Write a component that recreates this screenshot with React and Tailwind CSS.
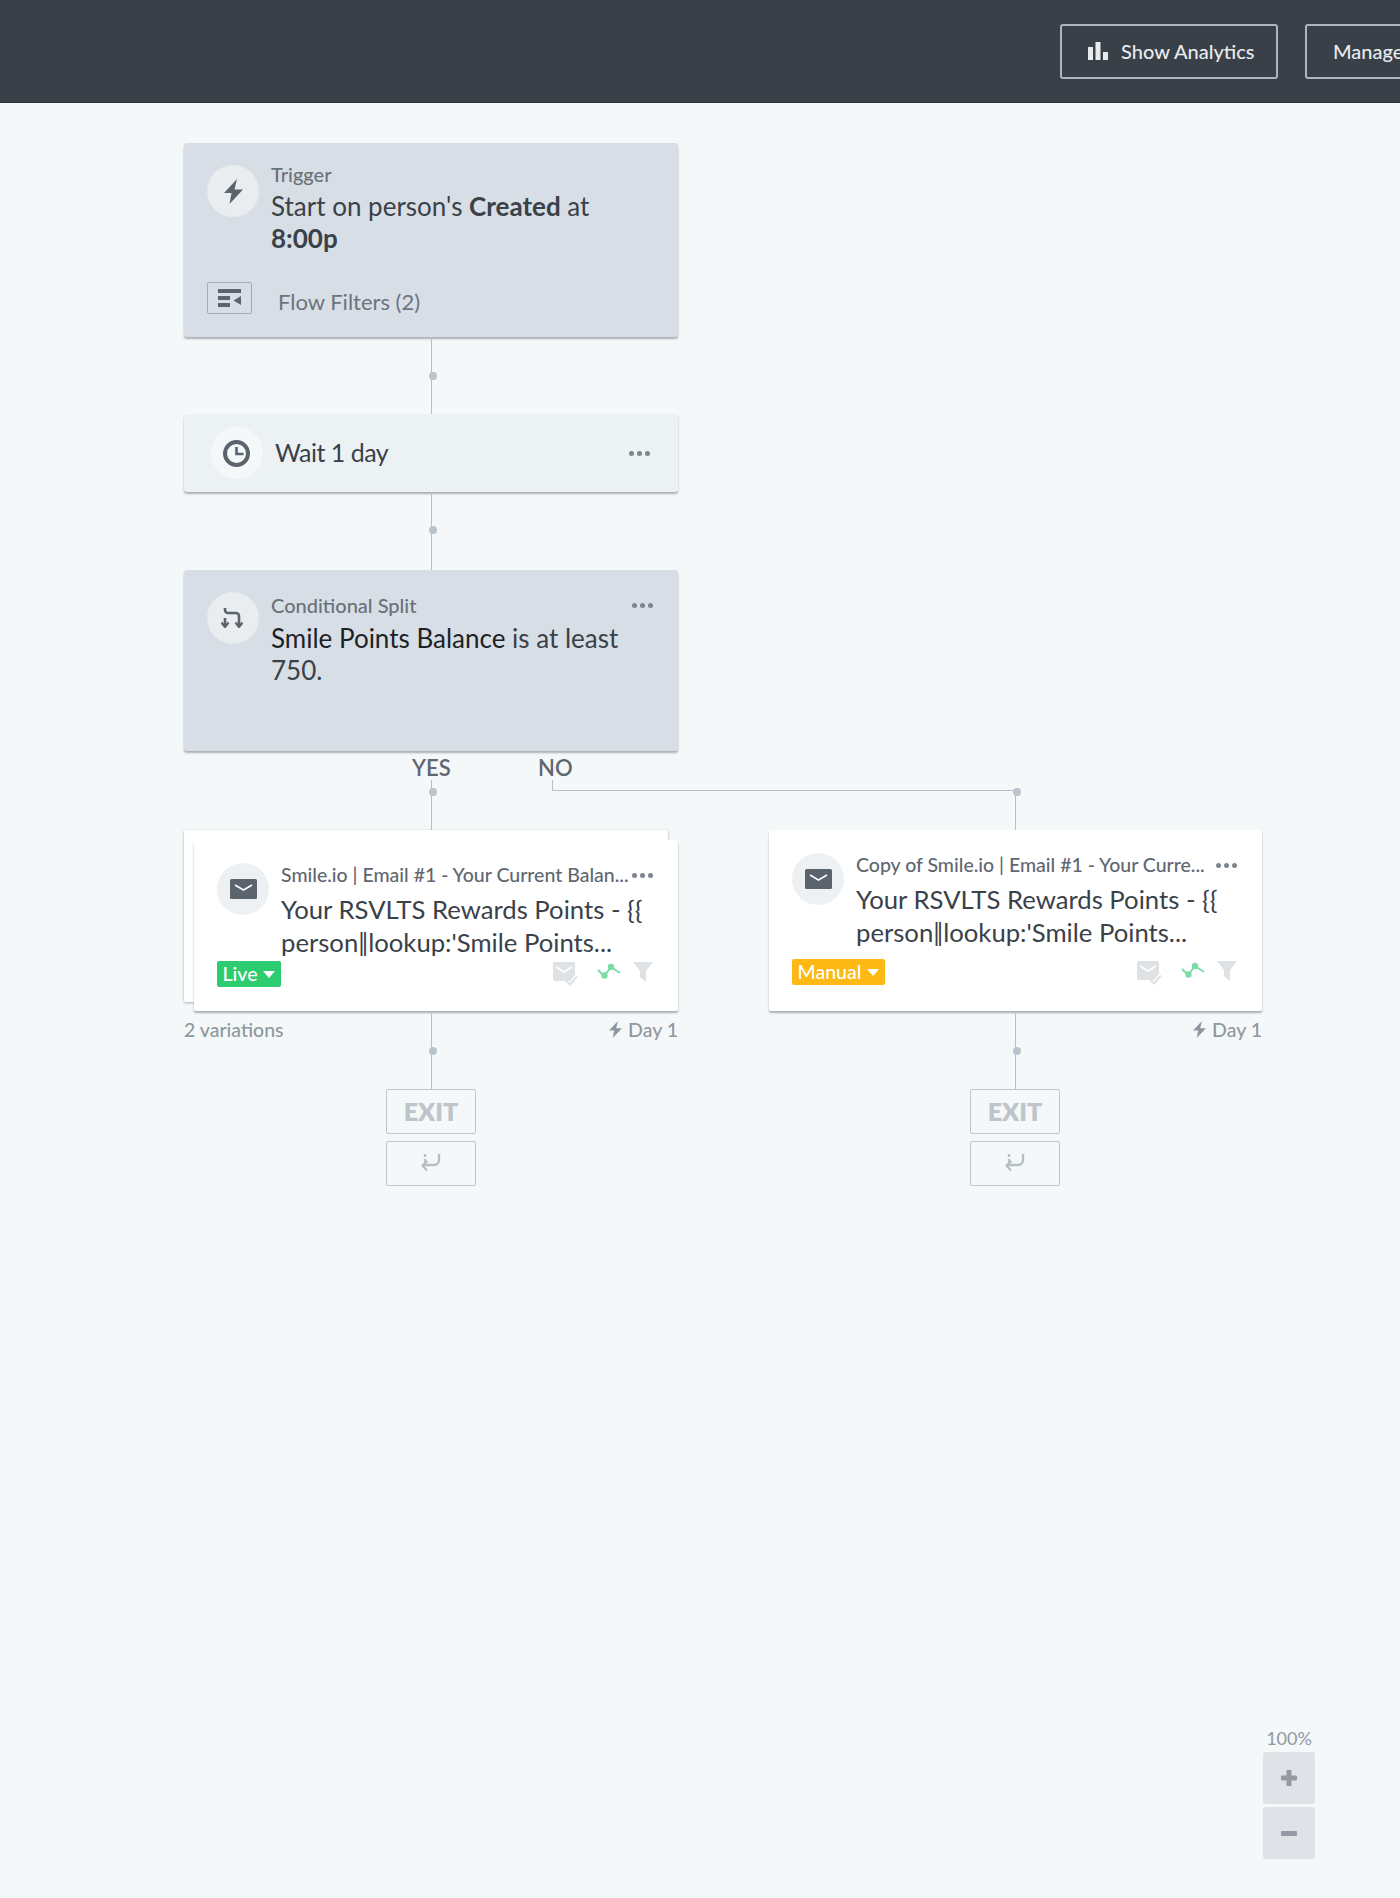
const Dots = ({ className = "" }) => (
  <div className={`flex gap-[3px] shrink-0 ${className}`}>
    <span className="w-[5px] h-[5px] rounded-full bg-[#7d858e]" />
    <span className="w-[5px] h-[5px] rounded-full bg-[#7d858e]" />
    <span className="w-[5px] h-[5px] rounded-full bg-[#7d858e]" />
  </div>
);

const Circle = ({ className = "", children }) => (
  <div className={`w-[52px] h-[52px] rounded-full flex items-center justify-center shrink-0 ${className}`}>{children}</div>
);

const Bolt = ({ className = "", fill = "#5b636d" }) => (
  <svg viewBox="0 0 19 25" className={className}>
    <polygon points="13,0 0,14 7.5,14 5.5,25 19,10.5 10.5,10.5" fill={fill} />
  </svg>
);

const MailIcon = () => (
  <svg width="27" height="20" viewBox="0 0 27 20">
    <rect width="27" height="20" rx="1.5" fill="#5b636d" />
    <path d="M5 6l8.5 5L22 6" fill="none" stroke="#fff" strokeWidth="1.6" />
  </svg>
);

const StatIcons = ({ className = "" }) => (
  <div className={`flex items-start ${className}`}>
    <svg width="25" height="24" viewBox="0 0 25 24">
      <path d="M0 1.5A1.5 1.5 0 0 1 1.5 0h19A1.5 1.5 0 0 1 22 1.5V13l-5 6H1.5A1.5 1.5 0 0 1 0 17.5z" fill="#dfe2e5" />
      <path d="M3 5l8 5 8-5" fill="none" stroke="#fff" strokeWidth="1.6" />
      <path d="M13 19l4 3.5 7-8" fill="none" stroke="#dfe2e5" strokeWidth="2" />
    </svg>
    <svg width="24" height="18" viewBox="0 0 24 18" className="ml-[19px] mt-[1px]">
      <path d="M1 7l6 6 7-9 9 6" fill="none" stroke="#7bdca5" strokeWidth="2" />
      <circle cx="7.5" cy="12.5" r="3.2" fill="#7bdca5" />
      <circle cx="14" cy="4" r="3.2" fill="#7bdca5" />
    </svg>
    <svg width="20" height="20" viewBox="0 0 20 20" className="ml-[12px]">
      <path d="M0 0h20l-7 9v11l-6-5V9z" fill="#dfe2e5" />
    </svg>
  </div>
);

const Caret = () => (
  <svg width="12" height="7" viewBox="0 0 12 7"><path d="M0 0h12L6 7z" fill="#fff" /></svg>
);

const Connector = ({ h, dot, x = 247, children }) => (
  <div className="relative" style={{ height: h }}>
    <div className="absolute top-0 bottom-0 w-px bg-[#b5bfc8]" style={{ left: x }} />
    <div className="absolute w-[8px] h-[8px] rounded-full bg-[#b9c3cc]" style={{ top: dot, left: x - 2 }} />
    {children}
  </div>
);

const ReturnIcon = () => (
  <svg width="20" height="20" viewBox="0 0 20 20" fill="none" stroke="#b5bdc5" strokeWidth="2.4">
    <path d="M4 0v3M4 5v3" />
    <path d="M18 0v6a5 5 0 0 1-5 5H3" />
    <path d="M6.5 7l-5 4.5 4.5 5" strokeWidth="2.2" />
  </svg>
);

const ExitBoxes = ({ left }) => (
  <div className="flex flex-col gap-[7px]" style={{ marginLeft: left }}>
    <div className="w-[90px] h-[45px] border border-[#bfc6cd] rounded-[2px] flex items-center justify-center text-[25px] font-extrabold text-[#bec4cb]">EXIT</div>
    <div className="w-[90px] h-[45px] border border-[#bfc6cd] rounded-[2px] flex items-center justify-center"><ReturnIcon /></div>
  </div>
);

const Subject = () => (
  <div className="text-[25.7px] leading-[33px] text-[#3a4149] whitespace-nowrap mt-[7px]">
    <div>Your RSVLTS Rewards Points - {"{{"}</div>
    <div>person<span className="tracking-[-3px]">||</span><span className="ml-[3px]">lookup:'Smile Points...</span></div>
  </div>
);

const DayOne = () => (
  <div className="flex items-center gap-[6px] text-[19.5px] font-medium text-[#8f97a0]">
    <Bolt className="w-[13px] h-[17px]" fill="#8f97a0" />
    <span>Day 1</span>
  </div>
);

export default function App() {
  return (
    <div className="relative w-[1400px] h-[1898px] overflow-hidden bg-[#f4f8f9] font-[Lato,sans-serif]">
      <header className="h-[103px] bg-[#394047] border-b border-[#2c3238] flex items-start gap-[27px] pt-[24px] pl-[1060px]">
        <button className="w-[218px] h-[55px] shrink-0 border-2 border-[#aeb5bc] rounded-[3px] flex items-center pl-[26px] gap-[13px] text-[20px] font-medium leading-[22px] pb-[2px] text-[#e8ebee]">
          <svg width="20" height="18" viewBox="0 0 20 18" fill="#e8ebee">
            <rect x="0" y="5" width="5" height="13" /><rect x="7.5" y="0" width="5" height="18" /><rect x="15" y="10" width="5" height="8" />
          </svg>
          Show Analytics
        </button>
        <button className="w-[200px] h-[55px] shrink-0 border-2 border-[#aeb5bc] rounded-[3px] pl-[26px] pb-[2px] text-left text-[20px] font-medium text-[#e8ebee]">Manage</button>
      </header>

      <main className="pt-[40px] pl-[184px]">
        <div className="w-[494px]">
          <section className="h-[194px] rounded-[3px] bg-[#d8dee5] shadow-[0_2px_2px_rgba(60,70,80,0.4)] pt-[22px] px-[23px]">
            <div className="flex gap-[12px]">
              <Circle className="bg-[#e9edf0]"><Bolt className="w-[19px] h-[25px]" /></Circle>
              <div className="-mt-[2px]">
                <div className="text-[20px] leading-[22px] font-medium text-[#69717a]">Trigger</div>
                <div className="text-[26px] leading-[32px] text-[#3a4149] mt-[5px]">
                  Start on person's <b>Created</b> at<br /><b>8:00p</b>
                </div>
              </div>
            </div>
            <div className="flex items-center mt-[24px]">
              <div className="w-[45px] h-[32px] border border-[#a3acb5] rounded-[2px] flex items-center justify-center">
                <svg width="23" height="18" viewBox="0 0 23 18" fill="#5b636d">
                  <rect width="23" height="4" /><rect y="7" width="12" height="4" /><rect y="14" width="12" height="4" /><polygon points="23,7 23,16 15.5,11.5" />
                </svg>
              </div>
              <span className="ml-[26px] pt-[7px] text-[22px] text-[#6c747d]">Flow Filters (2)</span>
            </div>
          </section>

          <Connector h={77} dot={35} />

          <section className="h-[78px] rounded-[3px] bg-[#ecf2f4] shadow-[0_2px_2px_rgba(60,70,80,0.4)] flex items-center pl-[27px] pr-[28px]">
            <Circle className="bg-[#f5f8f9]">
              <svg width="27" height="27" viewBox="0 0 27 27" fill="none" stroke="#5b636d" className="-ml-[2px]">
                <circle cx="13.5" cy="13.5" r="11.5" strokeWidth="4" />
                <path d="M13.5 7v7h7" strokeWidth="2.6" />
              </svg>
            </Circle>
            <span className="ml-[12px] text-[25px] tracking-[-0.5px] text-[#3a4149]">Wait 1 day</span>
            <Dots className="ml-auto" />
          </section>

          <Connector h={78} dot={34} />

          <section className="h-[181px] rounded-[3px] bg-[#d8dee5] shadow-[0_2px_2px_rgba(60,70,80,0.4)] pt-[22px] pl-[23px] pr-[25px]">
            <div className="flex gap-[12px]">
              <Circle className="bg-[#e9edf0]">
                <svg width="22" height="20" viewBox="0 0 22 20" fill="none" stroke="#5b636d" strokeWidth="2.6" className="-ml-[2px]">
                  <path d="M4 0v2a3 3 0 0 0 3 3h8a3 3 0 0 1 3 3v10" />
                  <path d="M4 10v8" />
                  <path d="M0.5 14.5L4 19l3.5-4.5M14.5 14.5L18 19l3.5-4.5" strokeWidth="2.2" />
                </svg>
              </Circle>
              <div className="flex-1">
                <div className="flex justify-between items-center mt-[2px]">
                  <div className="text-[20px] leading-[22px] font-medium text-[#69717a]">Conditional Split</div>
                  <Dots />
                </div>
                <div className="text-[26px] leading-[32px] text-[#3a4149] mt-[6px]">
                  <span className="text-[#1d2227]">Smile Points Balance</span> is at least<br />750.
                </div>
              </div>
            </div>
          </section>
        </div>

        <div className="relative h-[79px]">
          <span className="absolute left-[228px] top-[4px] text-[22px] font-semibold leading-[26px] text-[#5f6771]">YES</span>
          <span className="absolute left-[354px] top-[4px] text-[22px] font-semibold leading-[26px] text-[#5f6771]">NO</span>
          <div className="absolute left-[247px] top-[29px] bottom-0 w-px bg-[#b5bfc8]" />
          <div className="absolute left-[245px] top-[37px] w-[8px] h-[8px] rounded-full bg-[#b9c3cc]" />
          <div className="absolute left-[368px] top-[29px] w-[464px] h-[11px] border-l border-b border-[#b5bfc8]" />
          <div className="absolute left-[831px] top-[39px] bottom-0 w-px bg-[#b5bfc8]" />
          <div className="absolute left-[829px] top-[37px] w-[8px] h-[8px] rounded-full bg-[#b9c3cc]" />
        </div>

        <div className="flex gap-[91px]">
          <div className="w-[494px] shrink-0">
            <div className="relative h-[181px] pt-[10px] pl-[10px]">
              <div className="absolute left-0 top-0 w-[484px] h-[172px] bg-white rounded-[2px] shadow-[0_1px_3px_rgba(60,70,80,0.4)]" />
              <section className="relative h-[171px] bg-white rounded-[2px] shadow-[0_2px_2px_rgba(60,70,80,0.4)] pt-[23px] pl-[23px] pr-[25px]">
                <div className="flex gap-[12px]">
                  <Circle className="bg-[#eef1f3]"><MailIcon /></Circle>
                  <div className="flex-1 min-w-0 pt-[1px]">
                    <div className="flex items-center justify-between">
                      <div className="text-[19.5px] leading-[22px] font-medium text-[#5f6771] whitespace-nowrap">Smile.io | Email #1 - Your Current Balan...</div>
                      <Dots />
                    </div>
                    <Subject />
                  </div>
                </div>
                <div className="flex items-start justify-between mt-[2px]">
                  <div className="h-[26px] w-[64px] rounded-[2px] bg-[#2ecc71] flex items-center justify-center gap-[6px] text-[19.5px] font-medium text-white">Live <Caret /></div>
                  <StatIcons className="mt-[1px]" />
                </div>
              </section>
            </div>
            <Connector h={78} dot={36}>
              <div className="absolute inset-x-0 top-[4px] flex justify-between text-[19.5px] font-medium text-[#8f97a0]">
                <span>2 variations</span>
                <DayOne />
              </div>
            </Connector>
            <ExitBoxes left={202} />
          </div>

          <div className="w-[493px] shrink-0">
            <section className="h-[181px] bg-white rounded-[2px] shadow-[0_2px_2px_rgba(60,70,80,0.4)] pt-[23px] pl-[23px] pr-[25px]">
              <div className="flex gap-[12px]">
                <Circle className="bg-[#eef1f3]"><MailIcon /></Circle>
                <div className="flex-1 min-w-0 pt-[1px]">
                  <div className="flex items-center justify-between">
                    <div className="text-[19.5px] leading-[22px] font-medium text-[#5f6771] whitespace-nowrap">Copy of Smile.io | Email #1 - Your Curre...</div>
                    <Dots />
                  </div>
                  <Subject />
                </div>
              </div>
              <div className="flex items-start justify-between mt-[10px]">
                <div className="h-[26px] w-[93px] rounded-[2px] bg-[#fdb813] flex items-center justify-center gap-[6px] text-[19.5px] font-medium text-white">Manual <Caret /></div>
                <StatIcons className="mt-[2px]" />
              </div>
            </section>
            <Connector h={78} dot={36} x={246}>
              <div className="absolute right-0 top-[4px]"><DayOne /></div>
            </Connector>
            <ExitBoxes left={201} />
          </div>
        </div>
      </main>

      <div className="absolute left-[1263px] top-[1728px] w-[52px] flex flex-col items-center">
        <div className="text-[18px] leading-[21px] text-[#9299a2] mb-[3px]">100%</div>
        <div className="w-[52px] h-[52px] rounded-[3px] bg-[#dfe2e6] flex items-center justify-center">
          <svg width="16" height="16" viewBox="0 0 16 16" fill="#9499a3"><rect x="5.5" width="5" height="16" rx="1" /><rect y="5.5" width="16" height="5" rx="1" /></svg>
        </div>
        <div className="w-[52px] h-[52px] mt-[3px] rounded-[3px] bg-[#dfe2e6] flex items-center justify-center">
          <svg width="16" height="5" viewBox="0 0 16 5" fill="#9499a3"><rect width="16" height="5" rx="1" /></svg>
        </div>
      </div>
    </div>
  );
}
